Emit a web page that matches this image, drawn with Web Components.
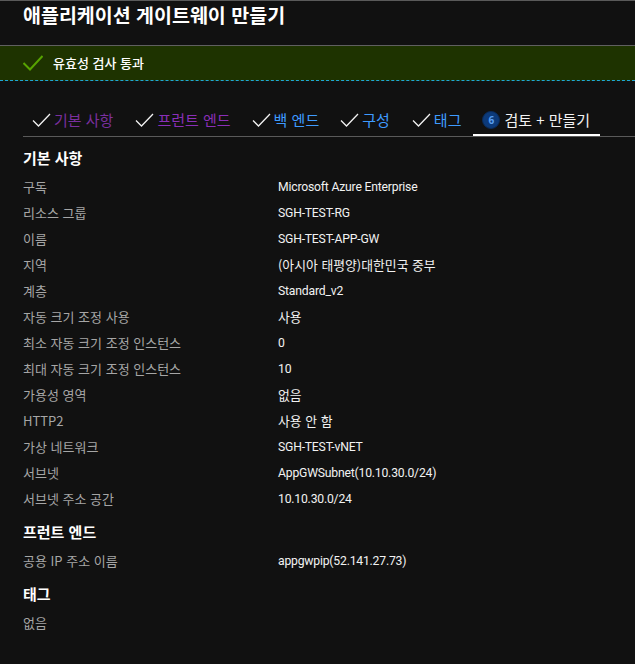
<!DOCTYPE html>
<html lang="ko"><head><meta charset="utf-8">
<style>
html,body{margin:0;padding:0;background:#111;height:664px;overflow:hidden}
body{font-family:Roboto,"Noto Sans CJK KR",sans-serif;color:#fff}
</style></head><body>
<template id="t-page"><style>
:host{display:flex;flex-direction:column;width:635px;height:664px;background:#111;border-top:1px solid #5a5a5a;box-sizing:border-box}
h1{margin:0;padding:0 0 0 23px;height:44px;font:700 19.5px/27px "Noto Sans CJK KR",sans-serif;color:#fff;box-sizing:border-box}
</style><h1><slot name="title"></slot></h1><slot></slot></template>

<template id="t-banner"><style>
:host{display:flex;align-items:center;background:#1e3300;border-top:1px solid #606060;border-bottom:1px dashed #1fa5d8;padding-left:23px;gap:10px;font:500 13px/16px "Noto Sans CJK KR",sans-serif;color:#fff;box-sizing:content-box;height:34px}
svg{display:block}
</style><svg width="20" height="16" viewBox="0 0 20 16"><path d="M0.5 8 L7 14.5 L19.5 1" fill="none" stroke="#57a300" stroke-width="2"/></svg><slot></slot></template>

<template id="t-tabs"><style>
:host{display:flex;margin:25px 0 0 23px;height:30px;border-bottom:1px solid #5a5a5a;width:612px;box-sizing:content-box}
</style><slot></slot></template>

<template id="t-tab"><style>
:host{display:flex;align-items:flex-start;gap:3px;height:30px;padding:4px var(--pr,13px) 0 9px;box-sizing:border-box;font:400 15px/20px "Noto Sans CJK KR",sans-serif;color:var(--c,#4a9cf0);white-space:nowrap}
svg{margin-top:3px;flex:none}
</style><svg width="19" height="14" viewBox="0 0 19 14"><path d="M1 7.5 L6.5 13 L18 1" fill="none" stroke="#f2f2f2" stroke-width="1.3"/></svg><slot></slot></template>

<template id="t-tab-active"><style>
:host{display:flex;align-items:flex-start;gap:4px;height:30px;padding:4px 10px 0 9px;box-sizing:border-box;font:400 15px/20px "Noto Sans CJK KR",sans-serif;color:#f2f2f2;white-space:nowrap;border-bottom:2px solid #fff}
b{display:flex;align-items:center;justify-content:center;width:18px;height:18px;margin-top:1px;border-radius:50%;background:#0c3a7a;border:1px solid #0a2a58;box-sizing:border-box;font:700 10px/1 "Open Sans",sans-serif;color:#5a9ff0}
</style><b>6</b><slot></slot></template>

<template id="t-section"><style>
:host{display:block;padding-left:23px}
h2{margin:0;font:700 15px/20px "Noto Sans CJK KR",sans-serif;color:#fff}
</style><h2><slot name="title"></slot></h2><slot></slot></template>

<template id="t-row"><style>
:host{display:grid;grid-template-columns:255px 1fr;height:26px;font:400 13px/26px "Noto Sans CJK KR",sans-serif;color:#a6a6a6;white-space:nowrap}
span{color:#f2f2f2;font:400 12.2px/26px Roboto,"Noto Sans CJK KR",sans-serif;letter-spacing:-.2px}
:host([ko]) span{font:400 12.85px/26px "Noto Sans CJK KR",sans-serif;letter-spacing:0}
</style><div><slot name="k"></slot></div><span><slot></slot></span></template>

<script>
for (const [n,id] of [['az-page','t-page'],['az-banner','t-banner'],['az-tabs','t-tabs'],['az-tab','t-tab'],['az-tab-active','t-tab-active'],['az-section','t-section'],['az-row','t-row']]) {
  customElements.define(n, class extends HTMLElement {
    constructor(){super();this.attachShadow({mode:'open'}).append(document.getElementById(id).content.cloneNode(true));}
  });
}
</script>

<az-page>
<span slot="title">애플리케이션 게이트웨이 만들기</span>
<az-banner>유효성 검사 통과</az-banner>
<az-tabs>
<az-tab style="--c:#7a2f9e">기본 사항</az-tab>
<az-tab style="--c:#8a2fb8;--pr:12px">프런트 엔드</az-tab>
<az-tab style="--c:#3f9bff;--pr:12px">백 엔드</az-tab>
<az-tab style="--c:#3f9bff">구성</az-tab>
<az-tab style="--c:#3f9bff;--pr:12px">태그</az-tab>
<az-tab-active>검토 + 만들기</az-tab-active>
</az-tabs>
<az-section style="margin-top:11px"><span slot="title">기본 사항</span>
<div style="height:6px"></div>
<az-row><span slot="k">구독</span>Microsoft Azure Enterprise</az-row>
<az-row><span slot="k">리소스 그룹</span>SGH-TEST-RG</az-row>
<az-row><span slot="k">이름</span>SGH-TEST-APP-GW</az-row>
<az-row ko><span slot="k">지역</span>(아시아 태평양)대한민국 중부</az-row>
<az-row><span slot="k">계층</span>Standard_v2</az-row>
<az-row ko><span slot="k">자동 크기 조정 사용</span>사용</az-row>
<az-row><span slot="k">최소 자동 크기 조정 인스턴스</span>0</az-row>
<az-row><span slot="k">최대 자동 크기 조정 인스턴스</span>10</az-row>
<az-row ko><span slot="k">가용성 영역</span>없음</az-row>
<az-row ko><span slot="k">HTTP2</span>사용 안 함</az-row>
<az-row><span slot="k">가상 네트워크</span>SGH-TEST-vNET</az-row>
<az-row><span slot="k">서브넷</span>AppGWSubnet(10.10.30.0/24)</az-row>
<az-row><span slot="k">서브넷 주소 공간</span>10.10.30.0/24</az-row>
</az-section>
<az-section style="margin-top:10px"><span slot="title">프런트 엔드</span>
<div style="height:6px"></div>
<az-row><span slot="k">공용 IP 주소 이름</span>appgwpip(52.141.27.73)</az-row>
</az-section>
<az-section style="margin-top:10px"><span slot="title">태그</span>
<div style="height:6px"></div>
<az-row><span slot="k">없음</span></az-row>
</az-section>
</az-page>
</body></html>
